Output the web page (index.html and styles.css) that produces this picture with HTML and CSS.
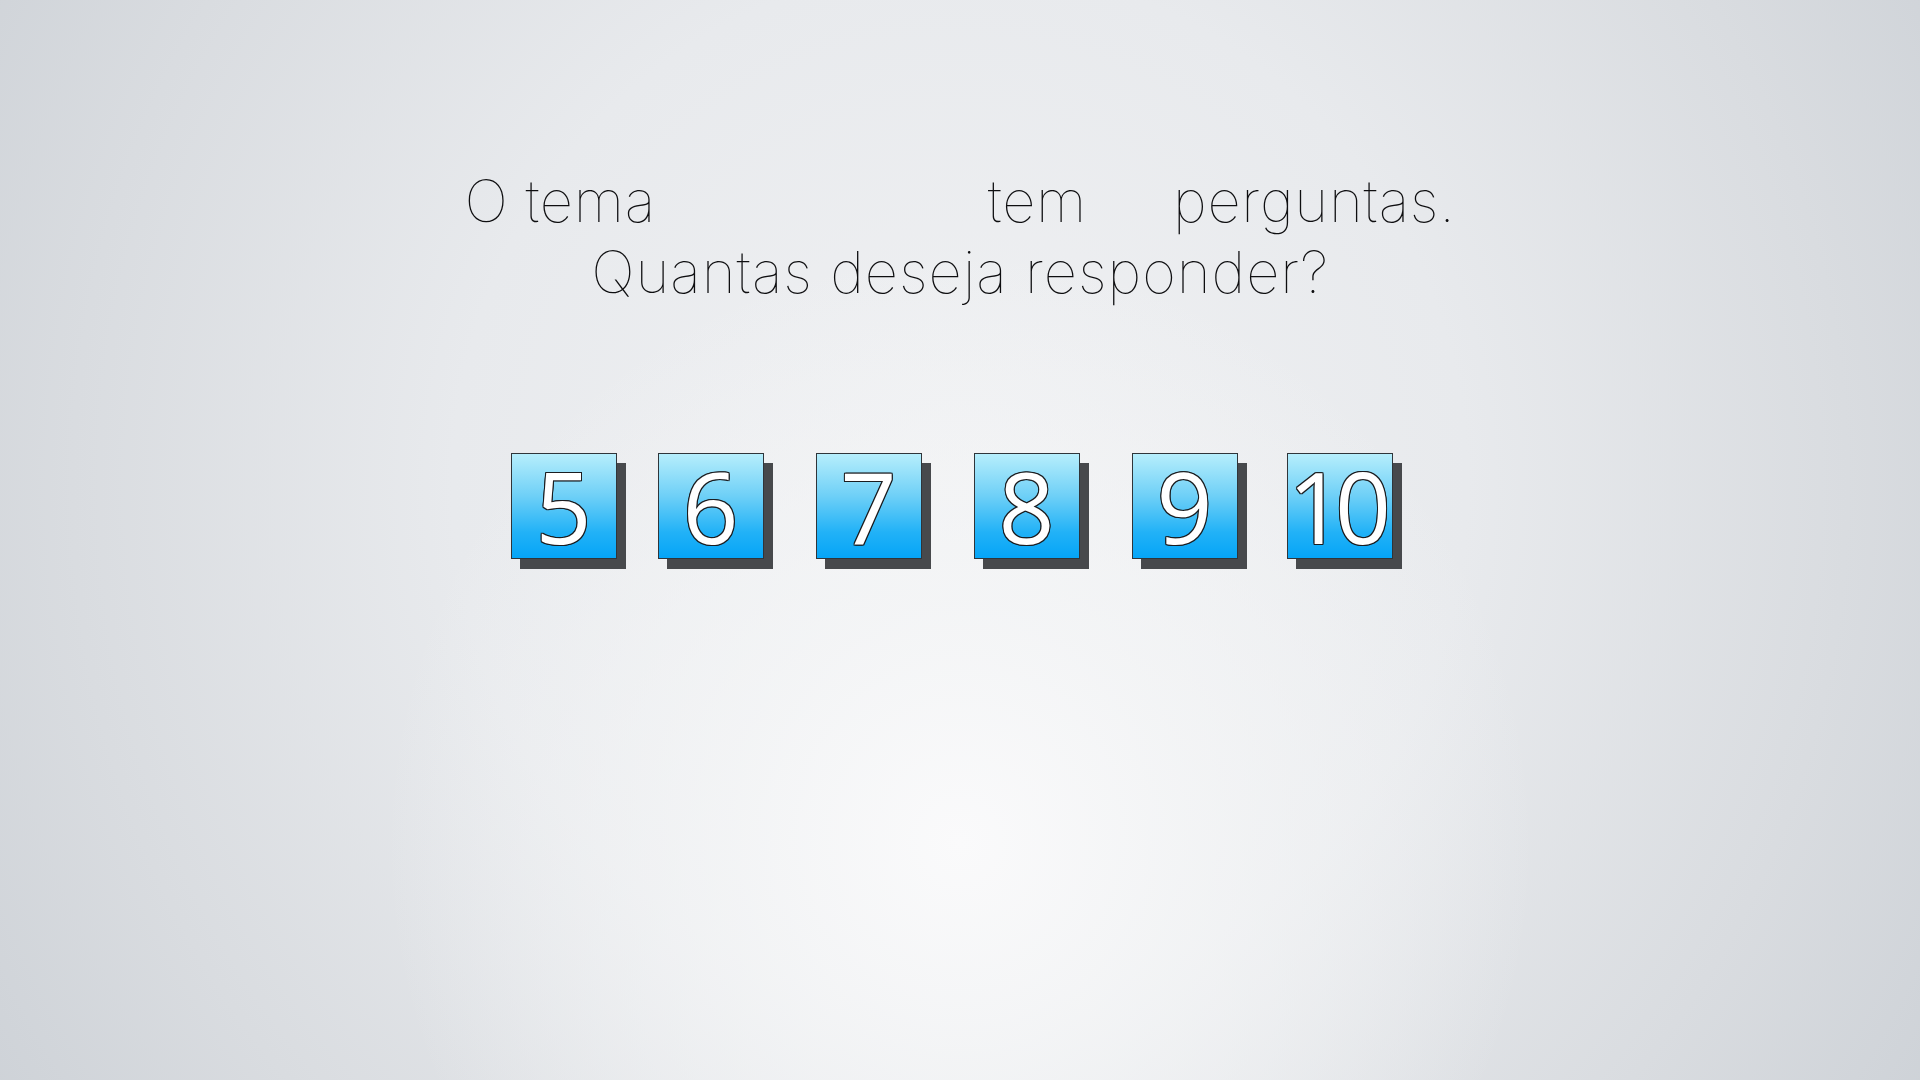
FILE: index.html
```html
<!DOCTYPE html>
<html lang="pt">
<head>
<meta charset="utf-8">
<title>Quantas perguntas?</title>
<link rel="stylesheet" href="styles.css">
</head>
<body>
<main class="stage">
  <h1 class="question">
    <span class="line">O tema<span class="blank blank-theme"></span>tem<span class="blank blank-count"></span>perguntas.</span>
    <span class="line line-wide">Quantas deseja responder?</span>
  </h1>
  <div class="options">
    <button class="opt">5</button>
    <button class="opt">6</button>
    <button class="opt">7</button>
    <button class="opt">8</button>
    <button class="opt">9</button>
    <button class="opt opt-wide">10</button>
  </div>
</main>
</body>
</html>
```
FILE: styles.css
```css
html, body {
  margin: 0;
  padding: 0;
  height: 100%;
}
body {
  background-color: #cdd1d6;
  background-image:
    radial-gradient(ellipse 30% 55% at 50% 78%, rgba(250,250,251,1) 0%, rgba(245,246,247,0.8) 40%, rgba(236,238,240,0) 100%),
    radial-gradient(ellipse 66% 120% at 50% 45%, #f0f1f3 0%, #e8eaed 40%, #d9dce0 70%, #c8cdd3 100%);
  overflow: hidden;
}
.stage {
  height: 100vh;
  display: flex;
  flex-direction: column;
  align-items: center;
  padding-top: 166px;
  box-sizing: border-box;
}
.question {
  margin: 0;
  font-family: "Inter", "Open Sans", sans-serif;
  font-weight: 100;
  font-size: 58px;
  line-height: 71px;
  letter-spacing: 0.7px;
  color: #0e0e10;
  text-align: center;
  display: flex;
  flex-direction: column;
  align-items: center;
}
.line {
  display: block;
  white-space: nowrap;
}
.line-wide {
  letter-spacing: 0.95px;
}
.blank {
  display: inline-block;
}
.blank-theme { width: 332px; }
.blank-count { width: 86px; }
.options {
  margin-top: 145px;
  margin-right: 17px;
  display: flex;
  gap: 52px;
}
.opt {
  width: 106px;
  height: 106px;
  box-sizing: border-box;
  padding: 0;
  border: 1.5px solid #2f353a;
  background: linear-gradient(to bottom, #b6eefc 0%, #6fd0f7 40%, #22b2f7 75%, #05a5f7 100%);
  box-shadow: 9px 10px 0 #47494c;
  font-family: "Open Sans", "Noto Sans", sans-serif;
  font-size: 98px;
  line-height: 1;
  color: #ffffff;
  display: flex;
  align-items: center;
  justify-content: center;
  text-shadow:
    -1px -1px 0 #1b1d20, 1px -1px 0 #1b1d20, -1px 1px 0 #1b1d20, 1px 1px 0 #1b1d20,
    0 -1px 0 #1b1d20, 0 1px 0 #1b1d20, -1px 0 0 #1b1d20, 1px 0 0 #1b1d20;
  cursor: pointer;
}
.opt:first-child {
  margin-right: -11px;
}
.opt:nth-child(5) {
  margin-right: -3px;
}
.opt-wide {
  letter-spacing: -9px;
  text-indent: -9px;
}
```
